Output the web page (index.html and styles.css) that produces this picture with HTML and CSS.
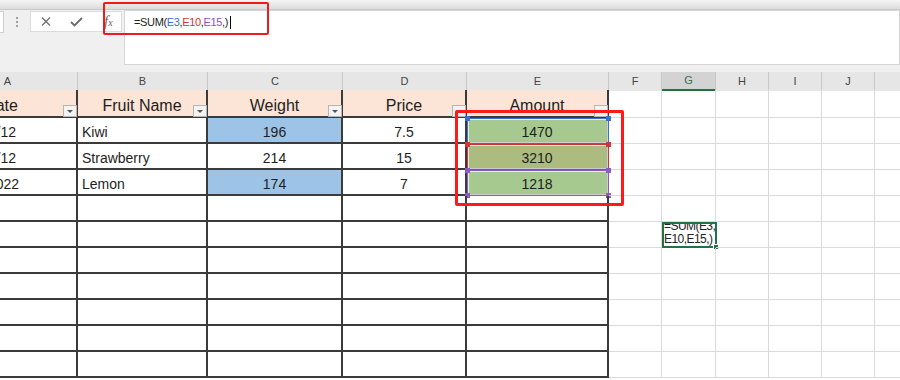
FILE: index.html
```html
<!DOCTYPE html>
<html lang="en">
<head>
    <meta charset="UTF-8">
    <title>Sheet - SUM formula</title>
    <link rel="stylesheet" href="styles.css">
</head>
<body>
    <div class="ribbon-edge"></div>

    <div class="formula-bar">
        <div class="name-box"></div>
        <div class="grip"><span></span><span></span><span></span></div>
        <div class="fb-buttons">
            <svg class="ico-x" width="10" height="9" viewBox="0 0 10 9"><path d="M1 0.5 L9 8.5 M9 0.5 L1 8.5" stroke="#6b6b6b" stroke-width="1.2" fill="none"/></svg>
            <svg class="ico-ok" width="13" height="10" viewBox="0 0 13 10"><path d="M1 5 L4.5 8.5 L12 1" fill="none" stroke="#6b6b6b" stroke-width="1.8"/></svg>
            <span class="fx">f<small>x</small></span>
        </div>
        <div class="fb-input">=SUM(<span class="ref-blue">E3</span>,<span class="ref-red">E10</span>,<span class="ref-purple">E15</span>,)<span class="caret"></span></div>
    </div>

    <div class="sheet">
        <div class="row letters">
            <div>A</div><div>B</div><div>C</div><div>D</div><div>E</div>
            <div>F</div><div class="on">G</div><div>H</div><div>I</div><div>J</div><div>K</div>
        </div>

        <div class="row head">
            <div class="tb date-head">Date<span class="filter"></span></div>
            <div class="tb">Fruit Name<span class="filter"></span></div>
            <div class="tb">Weight<span class="filter"></span></div>
            <div class="tb">Price<span class="filter"></span></div>
            <div class="tb">Amount<span class="filter"></span></div>
            <div></div><div></div><div></div><div></div><div></div><div></div>
        </div>

        <div class="row">
            <div class="tb date">2022/1/12</div>
            <div class="tb name">Kiwi</div>
            <div class="tb num fill-blue">196</div>
            <div class="tb num">7.5</div>
            <div class="tb num fill-green">1470<span class="sel sel-blue"><i class="hd tl"></i><i class="hd tr"></i></span></div>
            <div></div><div></div><div></div><div></div><div></div><div></div>
        </div>
        <div class="row">
            <div class="tb date">2022/2/12</div>
            <div class="tb name">Strawberry</div>
            <div class="tb num">214</div>
            <div class="tb num">15</div>
            <div class="tb num fill-olive">3210<span class="sel sel-red"><i class="hd tl"></i><i class="hd tr"></i></span></div>
            <div></div><div></div><div></div><div></div><div></div><div></div>
        </div>
        <div class="row">
            <div class="tb date date-long">3/15/2022</div>
            <div class="tb name">Lemon</div>
            <div class="tb num fill-blue">174</div>
            <div class="tb num">7</div>
            <div class="tb num fill-green">1218<span class="sel sel-purple"><i class="hd tl"></i><i class="hd tr"></i><i class="hd bl"></i><i class="hd br"></i></span></div>
            <div></div><div></div><div></div><div></div><div></div><div></div>
        </div>
        <div class="row">
            <div class="tb"></div><div class="tb"></div><div class="tb"></div><div class="tb"></div><div class="tb"></div>
            <div></div><div></div><div></div><div></div><div></div><div></div>
        </div>
        <div class="row">
            <div class="tb"></div><div class="tb"></div><div class="tb"></div><div class="tb"></div><div class="tb"></div>
            <div></div>
            <div><span class="active"><span class="active-text">=SUM(E3,<br>E10,E15,)</span><i class="fill-handle"></i></span></div>
            <div></div><div></div><div></div><div></div>
        </div>
        <div class="row">
            <div class="tb"></div><div class="tb"></div><div class="tb"></div><div class="tb"></div><div class="tb"></div>
            <div></div><div></div><div></div><div></div><div></div><div></div>
        </div>
        <div class="row">
            <div class="tb"></div><div class="tb"></div><div class="tb"></div><div class="tb"></div><div class="tb"></div>
            <div></div><div></div><div></div><div></div><div></div><div></div>
        </div>
        <div class="row">
            <div class="tb"></div><div class="tb"></div><div class="tb"></div><div class="tb"></div><div class="tb"></div>
            <div></div><div></div><div></div><div></div><div></div><div></div>
        </div>
        <div class="row">
            <div class="tb"></div><div class="tb"></div><div class="tb"></div><div class="tb"></div><div class="tb"></div>
            <div></div><div></div><div></div><div></div><div></div><div></div>
        </div>
        <div class="row">
            <div class="tb"></div><div class="tb"></div><div class="tb"></div><div class="tb"></div><div class="tb"></div>
            <div></div><div></div><div></div><div></div><div></div><div></div>
        </div>
    </div>

    <!-- red annotation boxes drawn over the screenshot -->
    <div class="callout callout-formula"></div>
    <div class="callout callout-amount"></div>
</body>
</html>
```

FILE: styles.css
```css
body {
    margin: 0;
    width: 900px;
    height: 380px;
    overflow: hidden;
    position: relative;
    background: #fff;
    font-family: "Liberation Sans", Arial, sans-serif;
    color: #1e1e1e;
}

/* top strip + formula bar */
.ribbon-edge {
    height: 9px;
    background: linear-gradient(#f5f5f5, #dcdcdc);
    border-bottom: 1px solid #c8c8c8;
}
.formula-bar {
    display: flex;
    align-items: flex-start;
    height: 62px;
    background: #f0f0f0;
}
.name-box {
    width: 3px;
    height: 20px;
    margin-top: 1px;
    background: #fff;
    border: 1px solid #d0d0d0;
    border-left: none;
}
.grip {
    display: flex;
    flex-direction: column;
    gap: 2px;
    margin: 7px 0 0 12px;
}
.grip span {
    width: 2px;
    height: 2px;
    background: #a0a0a0;
}
.fb-buttons {
    display: flex;
    align-items: center;
    box-sizing: border-box;
    width: 92px;
    height: 21px;
    margin: 1px 0 0 12px;
    padding-left: 10px;
    background: #fff;
    border: 1px solid #dcdcdc;
}
.ico-ok {
    margin-left: 19px;
}
.fx {
    margin-left: 21px;
    font: italic 15px "Liberation Serif", serif;
    line-height: 15px;
    color: #666;
}
.fx small {
    font-size: 10px;
}
.fb-input {
    flex: 1;
    box-sizing: border-box;
    height: 55px;
    margin-left: 2px;
    padding: 4px 0 0 9px;
    background: #fff;
    border: 1px solid #d6d6d6;
    font-size: 11px;
    line-height: 14px;
    letter-spacing: -0.35px;
    color: #222;
}
.ref-blue { color: #3c6fd1; }
.ref-red { color: #d0353b; }
.ref-purple { color: #8a4fc5; }
.caret {
    display: inline-block;
    width: 1px;
    height: 13px;
    margin-left: 2px;
    vertical-align: -3px;
    background: #000;
}

/* grid */
.sheet {
    margin-left: -62px;
    width: 1010px;
}
.row {
    display: grid;
    grid-template-columns: 140px 130px 135px 124px 142px 53px 54px 53px 53px 53px 73px;
    height: 26px;
}
.row > div {
    position: relative;
    box-sizing: border-box;
    border-right: 1px solid #dadada;
    border-bottom: 1px solid #dadada;
    padding-top: 5px;
    font-size: 14px;
    line-height: 19px;
    white-space: nowrap;
}
.row > .tb {
    border-right: 2px solid #3b3b3b;
    border-bottom: 2px solid #3b3b3b;
}

.letters {
    height: 18px;
}
.letters > div {
    padding: 0;
    border-right: 1px solid #c8c8c8;
    border-bottom: none;
    background: #e6e6e6;
    font-size: 11px;
    line-height: 18px;
    color: #444;
    text-align: center;
}
.letters > .on {
    background: #d3d3d3;
    border-bottom: 2px solid #217346;
    line-height: 17px;
    color: #3b6e50;
}

.head {
    height: 28px;
}
.head > .tb {
    padding-top: 6px;
    background: #fce4d6;
    font-size: 16px;
    line-height: 20px;
    text-align: center;
}
.head > .date-head {
    padding-right: 12px;
}
.filter {
    position: absolute;
    right: -1px;
    bottom: -1px;
    box-sizing: border-box;
    width: 14px;
    height: 12px;
    background: #f3f3f3;
    border: 1px solid #b5b5b5;
}
.filter::after {
    content: "";
    position: absolute;
    left: 3px;
    top: 4px;
    border-left: 3px solid transparent;
    border-right: 3px solid transparent;
    border-top: 3px solid #555;
}

.date {
    text-align: right;
    padding-right: 60px;
}
.row > .date-long {
    padding-right: 57px;
}
.name {
    padding-left: 4px;
}
.num {
    text-align: center;
}
.fill-blue { background: #9dc3e6; }
.fill-green { background: #a6c98f; }
.fill-olive { background: #abbc7e; }

/* formula reference highlights */
.sel {
    position: absolute;
    top: 0;
    left: 0;
    right: -2px;
    bottom: -2px;
    border: 1px solid currentColor;
    box-shadow: inset 0 0 0 1px rgba(255, 255, 255, 0.75);
}
.sel-blue { color: #3c6fd1; }
.sel-red { color: #d0353b; }
.sel-purple { color: #8a5bc6; }
.hd {
    position: absolute;
    width: 5px;
    height: 5px;
    background: currentColor;
}
.tl { left: -3px; top: -3px; }
.tr { right: -3px; top: -3px; }
.bl { left: -3px; bottom: -3px; }
.br { right: -3px; bottom: -3px; }

/* active cell in G */
.active {
    position: absolute;
    top: 0;
    left: 0;
    right: -2px;
    bottom: -1px;
    border: 2px solid #217346;
}
.active-text {
    display: flex;
    flex-direction: column;
    justify-content: flex-end;
    height: 100%;
    overflow: hidden;
    font-size: 12px;
    line-height: 13px;
    letter-spacing: -0.55px;
    color: #222;
}
.fill-handle {
    position: absolute;
    right: -4px;
    bottom: -4px;
    width: 4px;
    height: 4px;
    background: #217346;
    border: 1px solid #fff;
}

.callout {
    position: absolute;
    box-sizing: border-box;
    border-radius: 2px;
}
.callout-formula {
    left: 103px;
    top: 2px;
    width: 166px;
    height: 33px;
    border: 2px solid #f21b1b;
}
.callout-amount {
    left: 455px;
    top: 110px;
    width: 169px;
    height: 96px;
    border: 3px solid #ff1a1a;
}
```
